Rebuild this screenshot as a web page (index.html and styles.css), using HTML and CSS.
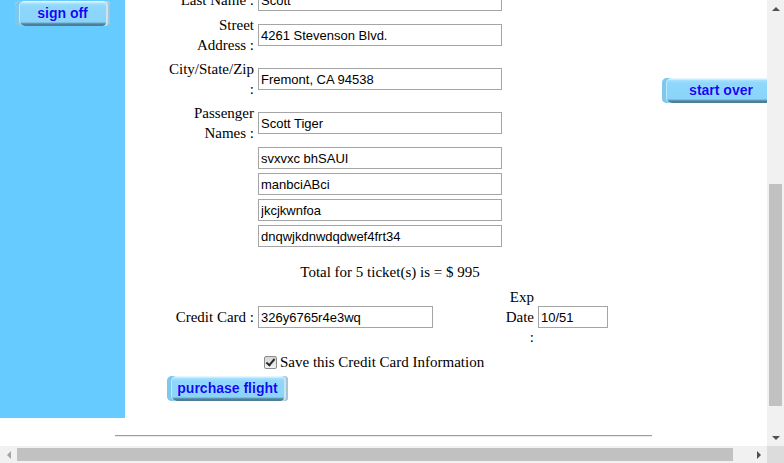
FILE: index.html
```html
<!DOCTYPE html>
<html lang="en">
<head>
<meta charset="utf-8">
<title>Purchase Flight</title>
<link rel="stylesheet" href="styles.css">
</head>
<body>
<div class="window">
  <div class="viewport">
    <div class="page">
      <aside class="side">
        <span class="img-btn btn-signoff">sign off</span>
      </aside>
      <main class="main">
        <form class="form">
          <label class="lbl">Last Name :</label>
          <div class="ctl"><input class="field" type="text" value="Scott"></div>

          <label class="lbl">Street<br>Address :</label>
          <div class="ctl"><input class="field" type="text" value="4261 Stevenson Blvd."></div>

          <label class="lbl">City/State/Zip<br>:</label>
          <div class="ctl"><input class="field" type="text" value="Fremont, CA 94538"></div>

          <label class="lbl">Passenger<br>Names :</label>
          <div class="ctl"><input class="field" type="text" value="Scott Tiger"></div>
          <div class="ctl extra"><input class="field" type="text" value="svxvxc bhSAUI"></div>
          <div class="ctl extra"><input class="field" type="text" value="manbciABci"></div>
          <div class="ctl extra"><input class="field" type="text" value="jkcjkwnfoa"></div>
          <div class="ctl extra"><input class="field" type="text" value="dnqwjkdnwdqdwef4frt34"></div>

          <p class="total">Total for 5 ticket(s) is = $ 995</p>

          <label class="lbl">Credit Card :</label>
          <div class="ctl cc">
            <input class="field field-cc" type="text" value="326y6765r4e3wq">
            <span class="exp-lbl">Exp<br>Date<br>:</span>
            <input class="field field-exp" type="text" value="10/51">
          </div>

          <label class="ctl save"><input class="check" type="checkbox" checked> Save this Credit Card Information</label>

          <div class="buy"><span class="img-btn btn-buy">purchase flight</span></div>
        </form>
      </main>
      <div class="aside">
        <span class="img-btn btn-start">start over</span>
      </div>
    </div>
    <hr class="rule">
  </div>

  <div class="vbar">
    <div class="sb-btn"><span class="tri tri-up"></span></div>
    <div class="vtrack"><div class="vthumb"></div></div>
    <div class="sb-btn"><span class="tri tri-down"></span></div>
  </div>
  <div class="hbar">
    <div class="sb-btn"><span class="tri tri-left"></span></div>
    <div class="htrack"><div class="hthumb"></div></div>
    <div class="sb-btn"><span class="tri tri-right"></span></div>
  </div>
  <div class="corner"></div>
</div>
</body>
</html>
```
FILE: styles.css
```css
html, body {
  margin: 0;
  padding: 0;
  overflow: hidden;
  background: #ffffff;
}

body {
  font-family: "Liberation Serif", "Times New Roman", serif;
  font-size: 15px;
  line-height: 20px;
  color: #000;
}

.window {
  width: 784px;
  height: 463px;
  display: grid;
  grid-template-columns: 767px 17px;
  grid-template-rows: 446px 17px;
}

.viewport {
  overflow: hidden;
  background: #fff;
}

/* page scrolled down: the first row is partly above the fold */
.page {
  width: 785px;
  display: flex;
  margin-top: -11px;
}

.side {
  width: 125px;
  flex: none;
  background: #66ccff;
  display: flex;
  flex-direction: column;
  align-items: center;
  padding-top: 12px;
  box-sizing: border-box;
}

.main {
  width: 530px;
  flex: none;
  padding-bottom: 17px;
}

.aside {
  width: 130px;
  flex: none;
  padding: 89px 0 0 7px;
  box-sizing: border-box;
}

/* image-like bevel buttons */
.img-btn {
  display: flex;
  align-items: center;
  justify-content: center;
  height: 25px;
  box-sizing: border-box;
  border-radius: 5px 4px 4px 5px;
  background: linear-gradient(#e4f6ff 0, #e4f6ff 1px, #a9e2ff 2px, #8fd7fc 5px, #8ad4fa 21px, #6fa8c6 22px, #50809b 23px, #4d7b95 25px);
  box-shadow: inset 4px 0 0 #7fc8ec, inset 5px 0 0 #b9e8ff, inset -2px 0 0 #a9c3d2, inset -4px 0 0 #c6e6f5;
  color: #0a0af5;
  font-family: "Liberation Sans", Arial, sans-serif;
  font-weight: bold;
  font-size: 14px;
  line-height: 1;
  padding-bottom: 2px;
  text-shadow: 0 0 1px #d8f3ff;
  white-space: nowrap;
}

.btn-signoff { width: 95px; }
.btn-start { width: 118px; }
.btn-buy { width: 121px; margin-left: 1px; }

/* form */
.form {
  width: 448px;
  margin: 0 auto;
  display: grid;
  grid-template-columns: 88px 356px;
  column-gap: 4px;
  row-gap: 4px;
  align-items: center;
}

.lbl {
  text-align: right;
  line-height: 20px;
}

.ctl {
  display: flex;
  align-items: center;
}

.extra { grid-column: 2; }

.field {
  width: 244px;
  height: 22px;
  box-sizing: border-box;
  border: 1px solid #a5a5a5;
  border-radius: 0;
  padding: 0 2px;
  margin: 0;
  font-family: "Liberation Sans", Arial, sans-serif;
  font-size: 13px;
  color: #000;
  background: #fff;
  outline: none;
}

.field-cc { width: 175px; }
.field-exp { width: 70px; margin-left: 4px; margin-right: 6px; }

.exp-lbl {
  width: 30px;
  margin-left: auto;
  text-align: right;
  line-height: 20px;
}

.total {
  grid-column: 1 / -1;
  margin: 0;
  padding: 11px 0 1px;
  text-align: center;
}

.save {
  grid-column: 2;
  padding-top: 1px;
  line-height: 20px;
  white-space: nowrap;
}

.check {
  appearance: none;
  -webkit-appearance: none;
  position: relative;
  width: 13px;
  height: 13px;
  margin: 0 3px 0 6px;
  border: 1px solid #8d8d8d;
  border-radius: 2px;
  background: linear-gradient(#d6d6d6, #f2f2f2);
  box-sizing: border-box;
  flex: none;
}

.check:checked::after {
  content: "";
  position: absolute;
  left: 3px;
  top: 0px;
  width: 3px;
  height: 7px;
  border-right: 2px solid #2b2b2b;
  border-bottom: 2px solid #2b2b2b;
  transform: rotate(40deg);
}

.buy {
  grid-column: 1 / -1;
  display: flex;
}

.rule {
  width: 70%;
  height: 0;
  margin: 17px auto 0;
  border: 0;
  border-top: 1px solid #9c9c9c;
  border-bottom: 1px solid #ececec;
}

/* drawn scrollbars */
.vbar {
  background: #f1f1f1;
  display: flex;
  flex-direction: column;
}

.hbar {
  background: #f1f1f1;
  display: flex;
}

.corner {
  background: #dcdcdc;
}

.sb-btn {
  width: 17px;
  height: 17px;
  flex: none;
  display: flex;
  align-items: center;
  justify-content: center;
}

.vtrack {
  flex: 1;
}

.vthumb {
  margin: 167px 2px 0;
  height: 222px;
  background: #c1c1c1;
}

.htrack {
  flex: 1;
  display: flex;
  align-items: center;
}

.hthumb {
  width: 716px;
  height: 13px;
  background: #c1c1c1;
}

.tri {
  width: 0;
  height: 0;
}

.tri-up {
  border-left: 4px solid transparent;
  border-right: 4px solid transparent;
  border-bottom: 4px solid #505050;
}

.tri-down {
  border-left: 4px solid transparent;
  border-right: 4px solid transparent;
  border-top: 4px solid #505050;
}

.tri-left {
  border-top: 4px solid transparent;
  border-bottom: 4px solid transparent;
  border-right: 4px solid #a3a3a3;
}

.tri-right {
  border-top: 4px solid transparent;
  border-bottom: 4px solid transparent;
  border-left: 4px solid #505050;
}
```
